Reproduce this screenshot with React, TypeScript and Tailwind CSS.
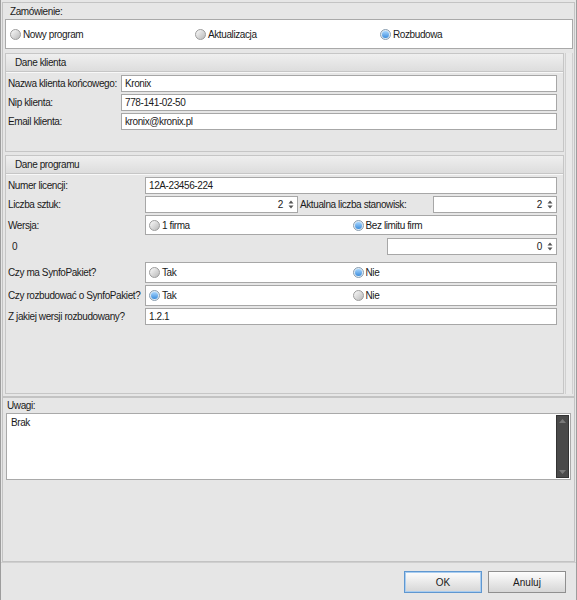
import React from 'react'

const Radio = ({ checked, label }: { checked?: boolean; label: string }) => (
  <div className="flex items-center gap-[2px]">
    <span
      className={`flex h-[11px] w-[11px] shrink-0 items-center justify-center rounded-full border ${
        checked ? 'border-[#8c9fb0] bg-[#dbe9f5]' : 'border-[#9c9c9c] bg-gradient-to-br from-[#fbfbfb] to-[#b9b9b9]'
      }`}
    >
      {checked && <span className="h-[7px] w-[7px] rounded-full bg-gradient-to-b from-[#a6d6ff] to-[#3a8ddb]" />}
    </span>
    <span>{label}</span>
  </div>
)

const Arrows = () => (
  <svg width="6" height="11" viewBox="0 0 6 11" className="shrink-0">
    <path d="M3 1.5 L5.5 4.5 H0.5Z M3 9.5 L5.5 6.5 H0.5Z" fill="#555" />
  </svg>
)

const Input = ({ value, className = '' }: { value?: string; className?: string }) => (
  <div className={`flex h-[17px] items-center border border-[#a7a7a7] bg-white pl-[3px] ${className}`}>{value}</div>
)

const Spin = ({ value, className = '' }: { value: string; className?: string }) => (
  <div className={`flex h-[17px] items-center justify-end border border-[#a7a7a7] bg-white pr-[3px] ${className}`}>
    <span className="mr-[5px]">{value}</span>
    <Arrows />
  </div>
)

const RadioBox = ({ a, b, checked }: { a: string; b: string; checked: 0 | 1 }) => (
  <div className="grid flex-1 grid-cols-2 items-center border border-[#a7a7a7] bg-white pl-[3px]">
    <Radio label={a} checked={checked === 0} />
    <Radio label={b} checked={checked === 1} />
  </div>
)

const Group = ({ title, children, className = '' }: { title: string; children: React.ReactNode; className?: string }) => (
  <div className={`flex flex-col border border-[#c6c6c6] ${className}`}>
    <div className="flex h-[18px] shrink-0 items-center border-b border-[#c6c6c6] bg-gradient-to-b from-[#efefef] to-[#dddddd] pl-[9px]">
      {title}
    </div>
    <div className="flex flex-1 flex-col border-t border-white/70 px-[2px] pt-[2px]">{children}</div>
  </div>
)

export default function App() {
  return (
    <div className="flex h-[600px] w-[577px] flex-col border-x border-[#9d9d9d] bg-[#e6e6e6] font-['Liberation_Sans',Arial,sans-serif] text-[10px] tracking-[-0.4px] text-[#1a1a1a]">
      {/* zamowienie + dane */}
      <div className="mx-px mt-[2px] flex h-[395px] flex-col border border-[#c3c3c3] pl-[2px] pr-[1px]">
        <div className="flex h-[16px] items-center pl-[5px]">Zamówienie:</div>
        <div className="flex h-[30px] items-center border border-[#a9a9a9] bg-white pl-[4px]">
          <div className="w-[185px]"><Radio label="Nowy program" /></div>
          <div className="w-[185px]"><Radio label="Aktualizacja" /></div>
          <Radio label="Rozbudowa" checked />
        </div>

        <div className="mt-[4px] flex flex-1 gap-0">
          <div className="flex flex-1 flex-col gap-[3px]">
            <Group title="Dane klienta" className="h-[99px]">
              <div className="flex flex-col gap-[2px] pr-[4px]">
                <div className="flex items-center">
                  <span className="w-[113px]">Nazwa klienta końcowego:</span>
                  <Input value="Kronix" className="flex-1" />
                </div>
                <div className="flex items-center">
                  <span className="w-[113px]">Nip klienta:</span>
                  <Input value="778-141-02-50" className="flex-1" />
                </div>
                <div className="flex items-center">
                  <span className="w-[113px]">Email klienta:</span>
                  <Input value="kronix@kronix.pl" className="flex-1" />
                </div>
              </div>
            </Group>

            <Group title="Dane programu" className="h-[239px]">
              <div className="flex flex-col pr-[4px]">
                <div className="flex h-[17px] items-center">
                  <span className="w-[137px]">Numer licencji:</span>
                  <Input value="12A-23456-224" className="flex-1" />
                </div>
                <div className="mt-[2px] flex h-[17px] items-center">
                  <span className="w-[137px]">Liczba sztuk:</span>
                  <Spin value="2" className="w-[153px]" />
                  <span className="w-[135px] pl-[2px]">Aktualna liczba stanowisk:</span>
                  <Spin value="2" className="flex-1" />
                </div>
                <div className="mt-[2px] flex h-[20px] items-stretch">
                  <span className="flex w-[137px] items-center">Wersja:</span>
                  <RadioBox a="1 firma" b="Bez limitu firm" checked={1} />
                </div>
                <div className="mt-[3px] flex h-[17px] items-center">
                  <span className="flex-1 pl-[4px]">0</span>
                  <Spin value="0" className="w-[170px]" />
                </div>
                <div className="mt-[7px] flex h-[21px] items-stretch">
                  <span className="flex w-[137px] items-center">Czy ma SynfoPakiet?</span>
                  <RadioBox a="Tak" b="Nie" checked={1} />
                </div>
                <div className="mt-[2px] flex h-[21px] items-stretch">
                  <span className="flex w-[137px] items-center">Czy rozbudować o SynfoPakiet?</span>
                  <RadioBox a="Tak" b="Nie" checked={0} />
                </div>
                <div className="mt-[2px] flex h-[17px] items-center">
                  <span className="w-[137px]">Z jakiej wersji rozbudowany?</span>
                  <Input value="1.2.1" className="flex-1" />
                </div>
              </div>
            </Group>
          </div>
          <div className="mb-[2px] ml-px w-[8px] border-x border-[#d0d0d0] bg-[#e9e9e9]" />
        </div>
      </div>

      {/* uwagi */}
      <div className="mx-px flex h-[165px] flex-col border border-[#c3c3c3] px-[3px]">
        <div className="flex h-[15px] items-center pl-px">Uwagi:</div>
        <div className="flex h-[67px] border border-[#a9a9a9] bg-white">
          <div className="flex-1 pl-[4px] pt-px">Brak</div>
          <div className="my-px mr-px flex w-[13px] flex-col items-center justify-between border border-[#333] bg-[#4a4a4a] py-[3px]">
            <svg width="7" height="4" viewBox="0 0 7 4"><path d="M3.5 0 L7 4 H0Z" fill="#7a7a7a" /></svg>
            <svg width="7" height="4" viewBox="0 0 7 4"><path d="M3.5 4 L7 0 H0Z" fill="#7a7a7a" /></svg>
          </div>
        </div>
      </div>

      {/* buttons */}
      <div className="flex flex-1 items-start justify-end gap-[6px] border-t border-[#cfcfcf] pr-[10px] pt-[8px]">
        <button className="h-[22px] w-[78px] border border-[#5f97d0] bg-gradient-to-b from-[#fdfdfd] to-[#d6d6d6] shadow-[inset_0_0_0_1px_#a9cdf0] tracking-normal">
          OK
        </button>
        <button className="h-[22px] w-[78px] border border-[#8f8f8f] bg-gradient-to-b from-[#fdfdfd] to-[#d6d6d6] tracking-normal">
          Anuluj
        </button>
      </div>
    </div>
  )
}
